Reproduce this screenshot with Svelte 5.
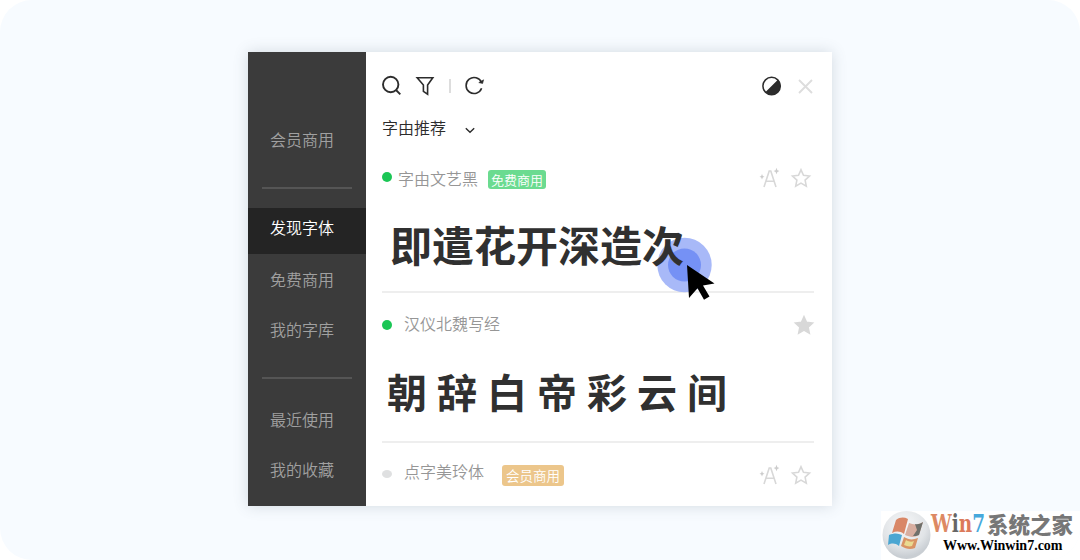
<script lang="ts">
  const groups = [
    [{ label: '会员商用' }],
    [{ label: '发现字体', active: true }, { label: '免费商用' }, { label: '我的字库' }],
    [{ label: '最近使用' }, { label: '我的收藏' }],
  ];

  const starPath = 'M10 1.8l2.5 5.500 6 .7-4.400 4.100 1.200 6-5.300-3-5.300 3 1.200-6L1.500 8l6-.7z';
</script>

{#snippet effectIcon()}
  <svg width="20" height="22" viewBox="0 0 20 22" fill="none" stroke="#d8d8d8" stroke-width="1.600">
    <path d="M5 20l5.200-16h1.600L17 20M6.800 14.300h8.400" />
    <path d="M17.500 .8l.9 2.400 2 .9-2 .8-.9 2.400-.9-2.400-2-.8 2-.9zM3 7l.8 2.100 1.700.7-1.700.7-.8 2.100-.8-2.100-1.700-.7 1.700-.7z" fill="#ccc" stroke="none" />
  </svg>
{/snippet}

{#snippet star(filled: boolean)}
  <svg width="20" height="20" viewBox="0 0 20 20" fill={filled ? '#d8d8d8' : 'none'} stroke="#d8d8d8" stroke-width="1.600">
    <path d={starPath} />
  </svg>
{/snippet}

<div class="page">
  <div class="window">
    <nav class="sidebar">
      {#each groups as group}
        <div class="group">
          {#each group as item}
            <div class="item" class:active={item.active}>{item.label}</div>
          {/each}
        </div>
      {/each}
    </nav>

    <main class="content">
      <header class="toolbar">
        <svg width="20" height="20" viewBox="0 0 20 20" fill="none" stroke="#2c2c2c" stroke-width="1.900">
          <circle cx="8.700" cy="8.500" r="7.700" />
          <path d="M14 14l4.300 4.300" />
        </svg>
        <svg class="filter" width="18" height="20" viewBox="0 0 18 20" fill="none" stroke="#2c2c2c" stroke-width="1.600">
          <path d="M1.200 1.800h15.600L11.600 9v9.200l-4.200-2.800V9z" />
        </svg>
        <span class="separator"></span>
        <svg width="20" height="20" viewBox="0 0 20 20" fill="none" stroke="#2c2c2c" stroke-width="1.600">
          <path d="M16.600 12.300A8 8 0 1 1 16.500 6.500" />
          <path d="M13.800 6.600l3.800 .9 1-3.700z" fill="#2c2c2c" stroke-width=".6" />
        </svg>
        <svg class="contrast" width="20" height="20" viewBox="0 0 20 20">
          <circle cx="9.600" cy="10" r="8.700" fill="#fff" stroke="#2c2c2c" stroke-width="1.500" />
          <path d="M15.900 3.700A8.900 8.900 0 1 1 3.300 16.300z" fill="#2c2c2c" />
        </svg>
        <svg width="15" height="15" viewBox="0 0 15 15" stroke="#ddd" stroke-width="1.900">
          <path d="M1 1l13 13M14 1L1 14" />
        </svg>
      </header>

      <div class="heading">
        字由推荐
        <svg width="10" height="7" viewBox="0 0 10 7" fill="none" stroke="#2c2c2c" stroke-width="1.400">
          <path d="M.8 1.200L5 5.300l4.200-4.100" />
        </svg>
      </div>

      <section class="font first">
        <div class="row">
          <i class="dot"></i>
          <span class="name">字由文艺黑</span>
          <span class="badge free">免费商用</span>
          <span class="actions">{@render effectIcon()}{@render star(false)}</span>
        </div>
        <div class="sample">
          <span class="text">即遣花开深造次</span>
          <svg class="pointer" width="60" height="66" viewBox="0 0 60 66">
            <circle cx="28.500" cy="28" r="27.200" fill="#a8b9f8" />
            <circle cx="28.500" cy="28" r="16.500" fill="#7591f5" />
          </svg>
          <svg class="cursor" width="30" height="38" viewBox="0 0 30 38">
            <path d="M1 1l27.500 18.500-11.500 2 6.500 11-5.500 3.300-6.500-11.500L3 34z" />
          </svg>
        </div>
      </section>

      <section class="font second">
        <div class="row">
          <i class="dot"></i>
          <span class="name">汉仪北魏写经</span>
          <span class="actions">{@render star(true)}</span>
        </div>
        <div class="sample brush"><span class="text">朝辞白帝彩云间</span></div>
      </section>

      <section class="font third">
        <div class="row">
          <i class="dot off"></i>
          <span class="name">点字美玲体</span>
          <span class="badge member">会员商用</span>
          <span class="actions">{@render effectIcon()}{@render star(false)}</span>
        </div>
      </section>
    </main>
  </div>

  <div class="watermark">
    <svg width="49" height="49" viewBox="0 0 49 49">
      <defs>
        <radialGradient id="orb" cx="45%" cy="30%" r="65%">
          <stop offset="0" stop-color="#f7f8f9" />
          <stop offset=".7" stop-color="#e1e4e7" />
          <stop offset="1" stop-color="#c9ced3" />
        </radialGradient>
      </defs>
      <circle cx="25.500" cy="24" r="24" fill="url(#orb)" />
      <path d="M15 9c4-3 8-3 12-1l-4 15c-4-3-8-3-12-1z" fill="#d98767" />
      <path d="M28 12c5 2 9 2 14-1l-4 13c-5 3-9 2-14 0z" fill="#d8aea0" />
      <path d="M34 13c3 .5 5 0 8-2l-4 13c-2 1-4 1-6 1l4-6z" fill="#6f706b" />
      <path d="M8 24c5-2 9-2 13 0l-3 11c-4-3-7-3-11-1z" fill="#4ba6d2" />
      <path d="M23 26c5 3 9 3 14 1l-3 10c-5 2-9 1-14-2z" fill="#d99465" />
      <path d="M25 29c3 2 6 2 8 1l-2 5c-3 1-5 0-8-1z" fill="#eadb91" />
    </svg>
    <div class="brand">
      <div class="title">
        <span class="win"><span class="letters">W<b class="gray">i</b><b class="red">n</b><b class="blue">7</b></span></span>
        <span class="cn">系统之家</span>
      </div>
      <div class="url">Www.Winwin7.com</div>
    </div>
  </div>
</div>

<style>
  :global(body) {
    background: #fff;
  }

  .page {
    position: relative;
    box-sizing: border-box;
    width: 1080px;
    height: 560px;
    padding: 52px 0 0 248px;
    overflow: hidden;
    border-radius: 32px;
    background: #f7fbff;
    font-family: 'Noto Sans CJK SC', sans-serif;
  }

  svg {
    display: block;
    flex-shrink: 0;
    overflow: visible;
  }

  .window {
    display: flex;
    width: 584px;
    height: 454px;
    background: #fff;
    box-shadow: 0 0 14px rgba(70, 85, 100, 0.2);
  }

  .sidebar {
    box-sizing: border-box;
    width: 118px;
    padding-top: 63px;
    background: #3b3b3b;
    font-size: 16px;
    font-weight: 350;
    color: #a0a0a0;
  }

  .group + .group::before {
    content: '';
    display: block;
    height: 2px;
    margin: 22px 14px 16px;
    background: #555;
  }

  .group:nth-child(2)::before {
    margin-bottom: 19px;
  }

  .item {
    height: 50px;
    padding-left: 22px;
    line-height: 48px;
  }

  .item.active {
    height: 46px;
    margin-bottom: 1px;
    line-height: 39px;
    color: #fff;
    background: #242424;
  }

  .content {
    flex: 1;
    padding: 0 18px 0 16px;
  }

  .toolbar {
    display: flex;
    align-items: center;
    height: 68px;
    padding-right: 1px;
  }

  .filter {
    margin-left: 14px;
  }

  .separator {
    width: 2px;
    height: 14px;
    margin: 0 14px 0 15px;
    background: #ddd;
  }

  .contrast {
    margin: 0 16px 0 auto;
  }

  .heading {
    display: flex;
    align-items: center;
    gap: 19px;
    height: 14px;
    padding-bottom: 4px;
    font-size: 16px;
    font-weight: 350;
    color: #2c2c2c;
  }

  .heading svg {
    margin-top: 6px;
  }

  .row {
    display: flex;
    align-items: center;
    height: 22px;
  }

  .first {
    margin-top: 29px;
    height: 124px;
    border-bottom: 2px solid #eee;
  }

  .second {
    height: 130px;
    padding-top: 18px;
    border-bottom: 2px solid #eee;
  }

  .third {
    padding-top: 21px;
  }

  .dot {
    width: 10px;
    height: 10px;
    margin-bottom: 2px;
    border-radius: 50%;
    background: #1bc655;
  }

  .second .dot {
    margin: 6px 0 0;
  }

  .dot.off {
    height: 8px;
    margin-bottom: 2px;
    background: #dfe0e1;
  }

  .name {
    margin-left: 12px;
    font-size: 16px;
    font-weight: 350;
    color: #969696;
  }

  .first .name {
    margin-left: 6px;
  }

  .second .name {
    margin-top: 2px;
  }

  .third .name {
    margin-bottom: 8px;
  }

  .badge {
    padding: 0 3px;
    border-radius: 3px;
    font-size: 13px;
    font-weight: 350;
    line-height: 19px;
    color: #fff;
  }

  .free {
    margin: 2px 0 0 10px;
    background: #6bdb90;
  }

  .member {
    margin-left: 18px;
    padding: 0 4px;
    font-size: 13.500px;
    line-height: 21px;
    background: #ecc68b;
  }

  .actions {
    display: flex;
    align-items: center;
    gap: 12px;
    margin-left: auto;
    margin-right: 3px;
  }

  .second .actions {
    margin: 6px 0 0 auto;
  }

  .sample {
    position: relative;
    margin: 25px 0 0 8px;
    font-size: 42px;
    font-weight: 700;
    line-height: 60px;
    white-space: nowrap;
    color: #303030;
  }

  .sample .text {
    position: relative;
    z-index: 1;
  }

  .brush {
    margin: 28px 0 0 5px;
    font-family: KaiTi, STKaiti, 'Noto Sans CJK SC', serif;
    font-size: 40px;
    font-weight: 700;
    letter-spacing: 10px;
  }

  .pointer {
    position: absolute;
    top: 23px;
    left: 266px;
  }

  .cursor {
    position: absolute;
    z-index: 2;
    top: 50px;
    left: 296px;
  }

  .watermark {
    position: absolute;
    right: 0;
    bottom: 0;
    display: flex;
    width: 199px;
    height: 49px;
    background: #fff;
  }

  .brand {
    margin-left: 1px;
    white-space: nowrap;
  }

  .title {
    display: flex;
    height: 26px;
    line-height: 25px;
  }

  .win {
    width: 56px;
  }

  .letters {
    display: inline-block;
    font: 700 24px/26px 'DejaVu Serif', serif;
    color: #dd8963;
    transform: scaleX(0.77);
    transform-origin: 0 0;
  }

  .gray {
    color: #666;
  }

  .red {
    color: #dc7a5a;
  }

  .blue {
    color: #47a9dc;
  }

  .cn {
    font-size: 21.500px;
    font-weight: 900;
    color: #777;
  }

  .url {
    padding-left: 12px;
    font: 700 14px/17px 'Liberation Serif', serif;
    color: #000;
  }
</style>
